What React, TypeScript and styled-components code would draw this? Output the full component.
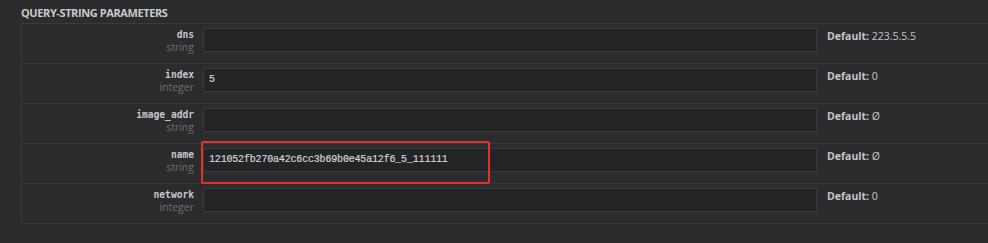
import React from "react";
import styled, { createGlobalStyle } from "styled-components";

const GlobalStyle = createGlobalStyle`
    html, body {
        margin: 0;
        padding: 0;
        background: #2b2c2e;
        overflow: hidden;
    }
`;

const Page = styled.div`
    width: 988px;
    height: 243px;
    background: #2b2c2e;
    padding: 6px 0 0 21px;
    box-sizing: border-box;
    font-family: "Open Sans", "Liberation Sans", sans-serif;
`;

const Title = styled.div`
    font-size: 11px;
    font-weight: 700;
    color: #c9cacc;
    line-height: 13px;
    height: 17px;
    letter-spacing: -0.4px;
`;

const Table = styled.div`
    border: 1px solid #3a3b3e;
    border-right: none;
    display: flex;
    flex-direction: column;
`;

const Row = styled.div<{ $last?: boolean }>`
    position: relative;
    display: grid;
    grid-template-columns: 181px 614px 1fr;
    height: 39px;
    border-bottom: ${(p) => (p.$last ? "none" : "1px solid #3a3b3e")};
    box-sizing: content-box;
`;

const LabelCell = styled.div`
    display: flex;
    flex-direction: column;
    align-items: flex-end;
    padding: 5px 9px 0 0;
`;

const Name = styled.span`
    font-family: "DejaVu Sans Mono", "Liberation Mono", monospace;
    font-size: 9.6px;
    font-weight: 700;
    color: #c4c5c7;
    line-height: 12px;
`;

const Type = styled.span`
    font-size: 10.5px;
    color: #6d6e71;
    line-height: 12px;
`;

const InputCell = styled.div`
    padding-top: 4px;
`;

const Input = styled.input`
    display: block;
    width: 614px;
    height: 24px;
    box-sizing: border-box;
    background: #232426;
    border: 1px solid #3b3c3f;
    border-radius: 2px;
    padding: 0 5px 1px;
    font-family: "Liberation Mono", "DejaVu Sans Mono", monospace;
    font-size: 10px;
    letter-spacing: -0.18px;
    line-height: 20px;
    color: #d4d5d7;
    outline: none;
    -webkit-text-stroke: 0.2px #d4d5d7;
`;

const DefaultCell = styled.div`
    padding: 6px 0 0 10px;
    font-size: 10.5px;
    color: #c4c5c7;
    line-height: 13px;

    strong {
        font-weight: 700;
    }
`;

const Highlight = styled.div`
    position: absolute;
    left: 179px;
    top: -3px;
    width: 289px;
    height: 43px;
    border: 2px solid #e8302a;
    border-radius: 2px;
    box-sizing: border-box;
    pointer-events: none;
`;

interface Param {
    name: string;
    type: string;
    value: string;
    def: string;
    highlight?: boolean;
}

const params: Param[] = [
    { name: "dns", type: "string", value: "", def: "223.5.5.5" },
    { name: "index", type: "integer", value: "5", def: "0" },
    { name: "image_addr", type: "string", value: "", def: "Ø" },
    {
        name: "name",
        type: "string",
        value: "121052fb270a42c6cc3b69b0e45a12f6_5_111111",
        def: "Ø",
        highlight: true,
    },
    { name: "network", type: "integer", value: "", def: "0" },
];

export default function App() {
    return (
        <Page>
            <GlobalStyle />
            <Title>QUERY-STRING PARAMETERS</Title>
            <Table>
                {params.map((p, i) => (
                    <Row key={p.name} $last={i === params.length - 1}>
                        <LabelCell>
                            <Name>{p.name}</Name>
                            <Type>{p.type}</Type>
                        </LabelCell>
                        <InputCell>
                            <Input defaultValue={p.value} />
                        </InputCell>
                        <DefaultCell>
                            <strong>Default:</strong> {p.def}
                        </DefaultCell>
                        {p.highlight && <Highlight />}
                    </Row>
                ))}
            </Table>
        </Page>
    );
}
